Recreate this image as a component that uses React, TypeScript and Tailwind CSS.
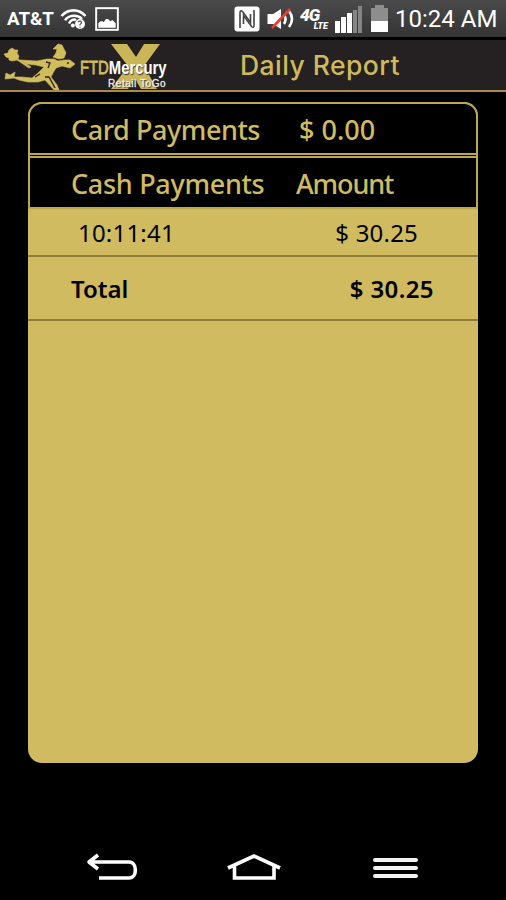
interface PaymentRow {
  id: number;
  time: string;
  amount: string;
}

const cashPayments: PaymentRow[] = [{ id: 1, time: "10:11:41", amount: "$ 30.25" }];

function StatusBar() {
  return (
    <div className="flex h-[37px] shrink-0 items-center bg-gradient-to-b from-[#4b4b4b] to-[#343434] text-white">
      <span className="w-[46px] ml-[7px] origin-left scale-x-[1.04] whitespace-nowrap font-['Roboto'] text-[18px] font-bold">
        AT&amp;T
      </span>

      {/* Wifi */}
      <svg className="ml-[7px] h-[24px] w-[27px]" viewBox="0 0 27 24" fill="none" stroke="white" strokeWidth="2.6">
        <path d="M1.5 9 C8 1.5 19 1.5 25.5 9" />
        <path d="M5 13.2 C9 7.5 18 7.5 22 12" />
        <path d="M9 16.5 C11 12.5 14 12 16 13.2" />
        <circle cx="12.8" cy="18.5" r="2" fill="white" stroke="none" />
        <circle cx="20" cy="17" r="5" fill="white" stroke="none" />
        <path d="M18 15.2 C19 13.5 22 14 21.5 16 L20 17.5 V18.5 M20 19.7 V20.7" stroke="#555" strokeWidth="1.2" />
      </svg>

      {/* Gallery */}
      <svg className="ml-[7px] h-[26px] w-[26px]" viewBox="0 0 24 24" fill="none">
        <rect x="2" y="2" width="20" height="20" stroke="white" strokeWidth="1.8" />
        <path d="M4 20 V16 L6 14 L8 14 L9 15 L11 12 L13 12 L15 14 L17 13 L20 16 V20 Z" fill="white" />
      </svg>

      {/* NFC */}
      <svg className="ml-auto h-[26px] w-[26px]" viewBox="0 0 26 26" fill="none">
        <rect x="0.5" y="0.5" width="25" height="25" rx="3" fill="white" />
        <path d="M6 22 V7 Q6 3.5 8.5 5.5 L16.5 16.5 V8" stroke="#444" strokeWidth="1.6" />
        <path d="M20 4 V19 Q20 22.5 17.5 20.5 L9.5 9.5 V18" stroke="#444" strokeWidth="1.6" />
      </svg>

      {/* Sound off */}
      <svg className="ml-[7px] h-[24px] w-[29px]" viewBox="0 0 29 24" fill="none">
        <path d="M0.5 7 H6 L14 2 V22 L6 17 H0.5 Z" fill="white" />
        <path d="M17 8 Q20 12 17 17 M22 4 Q28 12 22 20" stroke="white" strokeWidth="2.6" />
        <path d="M5 21 L23 2" stroke="#ed3a32" strokeWidth="2.6" />
      </svg>

      <div className="ml-[4px] flex h-[25px] w-[28px] flex-col pt-[3px] font-['Roboto'] font-black">
        <span className="h-[13px] origin-left scale-x-[1.02] text-[17px] italic leading-[13px] tracking-[-1px]">4G</span>
        <span className="h-[9px] self-end text-[9px] italic leading-[9px]">LTE</span>
      </div>

      {/* Signal */}
      <div className="ml-[7px] mb-[-1px] flex h-[28px] w-[28px] items-end gap-[1px]">
        <div className="h-[12px] w-[5px] bg-white" />
        <div className="h-[16px] w-[5px] bg-white" />
        <div className="h-[20px] w-[5px] bg-white" />
        <div className="h-[23px] w-[4px] bg-[#858585]" />
        <div className="h-[27px] w-[4px] bg-[#858585]" />
      </div>

      {/* Battery */}
      <div className="ml-[8px] flex h-[27px] w-[17px] flex-col">
        <div className="h-[3px] w-[9px] self-center bg-[#8d8d8d]" />
        <div className="h-[13px] bg-[#8d8d8d]" />
        <div className="h-[11px] bg-white" />
      </div>

      <span className="ml-[7px] w-[111px] whitespace-nowrap font-['Roboto'] text-[24px]">10:24 AM</span>
    </div>
  );
}

function Logo() {
  return (
    <div className="relative h-[50px] w-[172px]">
      {/* Running messenger */}
      <svg className="absolute left-0 top-0 h-[50px] w-[80px]" viewBox="0 0 80 50" fill="#d2bd5c" stroke="#d2bd5c" strokeWidth="0.6">
        <path d="M4 14 L8 13 L9 10 L12 8 L15 10 L18 10 L17 13 L19 16 L18 19 L23 22 L31 27 L29 28 L17 20 L12 21 L9 20 L9 18 L6 17 Z" />
        <path d="M53 9 L58 4 L62 5 L64 9 L66 13 L64 18 L59 19 L53 17 L56 13 L57 9 Z" />
        <path d="M20 20 L37 21 L47 19 L54 19 L58 21 L64 20 L70 20 L75 24 L70 28 L62 26 L56 28 L53 33 L51 37 L57 45 L59 50 L54 50 L45 40 L38 42 L28 42 L19 40 L14 38 L5 39 L6 33 L10 35 L15 32 L14 37 L22 37 L32 38 L38 33 L44 27 L36 25 L27 24 Z" />
        <path d="M46 22 L50 23 L48 28 M45 37 L49 37 L55 48 M40 34 L35 37" fill="none" stroke="#252021" strokeWidth="1.3" />
        <circle cx="68" cy="23" r="0.9" fill="#252021" stroke="none" />
      </svg>
      <svg className="absolute left-[110px] top-[4px] h-[45px] w-[52px]" viewBox="0 0 52 45" fill="#cbb657">
        <path d="M1 0 H17 L26 13 L34 0 H50 L34 22 L47 45 H31 L25 35 L18 45 H1 L18 22 Z" />
      </svg>
      <div className="absolute left-[80px] top-[15px] origin-left scale-x-[0.78] whitespace-nowrap font-['Liberation_Sans'] text-[19px] leading-[25px]">
        <span className="text-[#d2bd5c] [-webkit-text-stroke:0.8px_#d2bd5c]">FTD</span>
        <span className="font-bold text-white [text-shadow:1px_1px_1px_#333]">Mercury</span>
      </div>
      <span className="absolute left-[108px] top-[38px] whitespace-nowrap font-['Liberation_Sans'] text-[10px] leading-[12px] tracking-[0.55px] text-white [text-shadow:1px_1px_1px_#333] [-webkit-text-stroke:0.3px_#ddd]">
        Retail ToGo
      </span>
    </div>
  );
}

function NavBar() {
  return (
    <div className="mt-auto flex h-[66px] items-center justify-between pl-[85px] pr-[88px]">
      <svg className="h-[30px] w-[53px]" viewBox="0 0 53 30" fill="none" stroke="white" strokeWidth="3.6" strokeLinejoin="round">
        <path d="M13 3 L4 10 L13 17 M4 10 H44 C52.5 10 52.5 26 44 26 H14" />
      </svg>
      <svg className="mr-[4px] h-[30px] w-[54px]" viewBox="0 0 54 30" fill="none" stroke="white" strokeWidth="3.6">
        <path d="M1 16 L27 4 L53 16 M7.5 14 V26 H47 V14" />
      </svg>
      <div className="mt-[2px] flex w-[45px] flex-col gap-[4px]">
        <div className="h-[4px] rounded-full bg-[#f2f2f2]" />
        <div className="h-[4px] rounded-full bg-[#f2f2f2]" />
        <div className="h-[4px] rounded-full bg-[#f2f2f2]" />
      </div>
    </div>
  );
}

export default function App() {
  return (
    <div className="flex h-[900px] w-[506px] flex-col overflow-hidden bg-black">
      <StatusBar />

      <header className="mt-[3px] flex h-[52px] shrink-0 border-b-2 border-[#a88a4b] bg-[#252021]">
        <Logo />
        <h1 className="ml-[68px] whitespace-nowrap font-['Inter'] text-[26.5px] font-medium leading-[51px] tracking-[0.45px] text-[#cfba5b]">
          Daily Report
        </h1>
      </header>

      <main className="mx-[28px] mt-[10px] flex h-[661px] flex-col overflow-hidden rounded-[14px] bg-[#d0bb60] font-['Noto_Sans'] text-black">
        {/* Card payments */}
        <div className="flex h-[53px] rounded-t-[14px] border-2 border-[#bda852] bg-black text-[27px] font-medium leading-[51px] text-[#d0bb60]">
          <span className="w-[228px] pl-[41px] tracking-[-0.45px] whitespace-nowrap">Card Payments</span>
          <span className="pl-[41px] whitespace-nowrap">$ 0.00</span>
        </div>

        {/* Cash payments */}
        <div className="flex h-[54px] border-2 border-t-0 border-[#bda852] bg-black text-[27px] font-medium leading-[52px] text-[#d0bb60]">
          <div className="flex w-full border-t-2 border-[#bda852] shadow-[inset_0_0_0_0_#000] mt-px">
            <span className="w-[228px] pl-[41px] tracking-[-0.3px] whitespace-nowrap">Cash Payments</span>
            <span className="pl-[38px] tracking-[-1.1px] whitespace-nowrap">Amount</span>
          </div>
        </div>

        {cashPayments.map((payment) => (
          <div
            key={payment.id}
            className="flex h-[48px] justify-between border-b-2 border-[#8f7c3c] pl-[50px] pr-[60px] text-[24px] leading-[48px] tracking-[0.2px]"
          >
            <span>{payment.time}</span>
            <span>{payment.amount}</span>
          </div>
        ))}

        <div className="flex h-[64px] justify-between border-b-2 border-[#8f7c3c] pl-[43px] pr-[44px] text-[24px] font-semibold leading-[64px]">
          <span>Total</span>
          <span className="tracking-[0.4px]">$ 30.25</span>
        </div>
      </main>

      <NavBar />
    </div>
  );
}
